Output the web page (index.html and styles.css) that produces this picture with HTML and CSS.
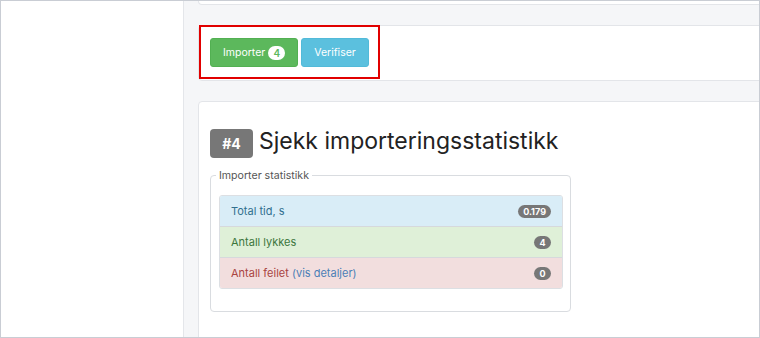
FILE: index.html
```html
<!DOCTYPE html>
<html lang="no">
<head>
<meta charset="utf-8">
<title>Import</title>
<link rel="stylesheet" href="styles.css">
</head>
<body>
<div class="frame">
  <aside class="sidebar"></aside>
  <main class="content">
    <div class="card card-top"></div>
    <div class="card card-actions">
      <div class="btn-row">
        <button class="btn btn-success">Importer <span class="btn-badge">4</span></button>
        <button class="btn btn-info">Verifiser</button>
      </div>
      <div class="highlight"></div>
    </div>
    <div class="card card-main">
      <h2 class="title"><span class="step">#4</span> Sjekk importeringsstatistikk</h2>
      <fieldset class="stats">
        <legend>Importer statistikk</legend>
        <ul class="list-group">
          <li class="item item-info"><span>Total tid, s</span><span class="badge">0.179</span></li>
          <li class="item item-success"><span>Antall lykkes</span><span class="badge">4</span></li>
          <li class="item item-danger"><span>Antall feilet <a href="#" class="link">(vis detaljer)</a></span><span class="badge">0</span></li>
        </ul>
      </fieldset>
    </div>
  </main>
</div>
</body>
</html>
```

FILE: styles.css
```css
* { box-sizing: border-box; }
html, body { margin: 0; padding: 0; }
body {
  font-family: Inter, "Noto Sans", "Liberation Sans", sans-serif;
  color: #333;
  background: #fff;
}
.frame {
  width: 760px;
  height: 338px;
  border: 1px solid #c9cdd4;
  display: flex;
  overflow: hidden;
}
.sidebar {
  width: 183px;
  flex: none;
  background: #fff;
  border-right: 1px solid #e4e6ea;
}
.content {
  flex: 1;
  min-width: 0;
  background: #f5f6f8;
  padding-left: 14px;
  display: flex;
  flex-direction: column;
  overflow: hidden;
}
.card {
  background: #fff;
  border: 1px solid #e3e5e9;
  border-radius: 4px;
  margin-right: -20px;
  flex: none;
}
.card-top {
  height: 4px;
  border-top: 0;
  border-radius: 0 0 4px 4px;
}
.card-actions {
  margin-top: 20px;
  height: 56px;
  padding: 12px 11px;
  position: relative;
}
.btn-row {
  display: flex;
  gap: 3px;
}
.btn {
  font-family: inherit;
  font-size: 10.5px;
  color: #fff;
  height: 29px;
  padding: 0 12px;
  border-radius: 3px;
  border: 1px solid transparent;
  display: inline-flex;
  align-items: center;
  cursor: pointer;
}
.btn-success { background: #5cb85c; border-color: #52b052; width: 88px; }
.btn-info { background: #5bc0de; border-color: #52bad9; width: 68px; justify-content: center; }
.btn-badge {
  display: inline-block;
  background: #fff;
  color: #5cb85c;
  font-size: 10px;
  font-weight: 600;
  line-height: 14px;
  height: 14px;
  min-width: 17px;
  padding: 0 5px;
  border-radius: 8px;
  margin-left: 3px;
  text-align: center;
}
.highlight {
  position: absolute;
  left: 0;
  top: -1px;
  width: 181px;
  height: 54px;
  border: 2px solid #e10000;
  pointer-events: none;
}
.card-main {
  margin-top: 20px;
  height: 260px;
  padding: 25px 11px 20px;
}
.title {
  margin: 0;
  font-size: 23px;
  font-weight: 400;
  color: #222;
  line-height: 29px;
  display: flex;
  align-items: baseline;
  gap: 6px;
}
.step {
  display: inline-block;
  background: #777;
  color: #fff;
  font-size: 14px;
  font-weight: 700;
  width: 43px;
  height: 29px;
  line-height: 29px;
  text-align: center;
  border-radius: 4px;
}
.stats {
  margin: 11px 0 0;
  width: 361px;
  border: 1px solid #d9dce0;
  border-radius: 4px;
  padding: 13px 7px 22px 8px;
}
.stats legend {
  font-size: 10.6px;
  color: #555;
  padding: 0 3px;
  margin-left: -3px;
}
.list-group {
  list-style: none;
  margin: 0;
  padding: 0;
  border: 1px solid #dcdfe3;
  border-radius: 3px;
  overflow: hidden;
}
.item {
  height: 31px;
  display: flex;
  align-items: center;
  justify-content: space-between;
  padding: 0 11px 0 11px;
  font-size: 11px;
}
.item + .item { border-top: 1px solid #d6d9dc; }
.item-info { background: #d9edf7; color: #31708f; height: 30px; }
.item-success { background: #dff0d8; color: #3c763d; }
.item-danger { background: #f2dede; color: #a94442; }
.link { color: #4b7fb6; text-decoration: none; }
.badge {
  background: #777;
  color: #fff;
  font-size: 9px;
  font-weight: 700;
  height: 13px;
  line-height: 13px;
  min-width: 17px;
  padding: 0 5px;
  border-radius: 7px;
  text-align: center;
}
```
